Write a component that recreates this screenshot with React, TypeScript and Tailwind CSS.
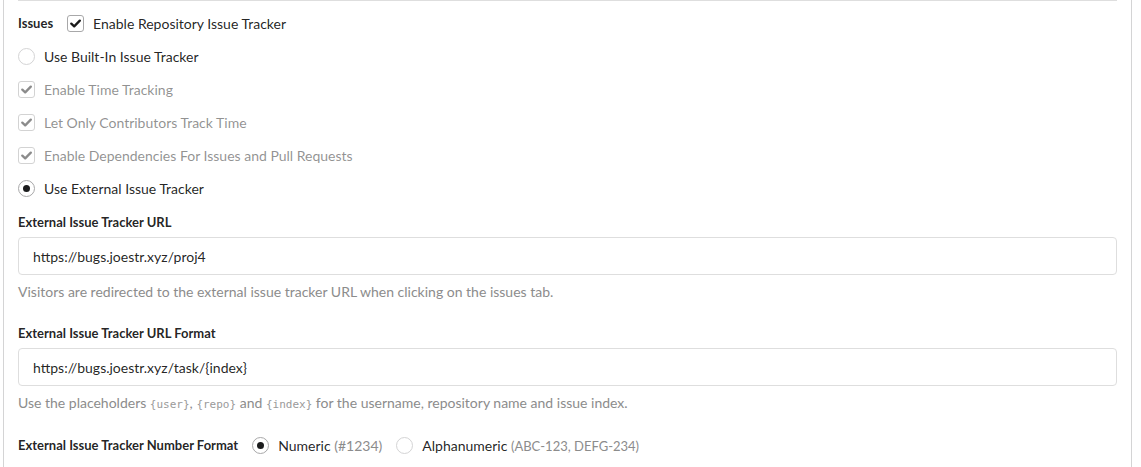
import React from "react";

function Check({ checked = true }: { checked?: boolean }) {
  return (
    <span className="relative flex h-[17px] w-[17px] shrink-0 items-center justify-center rounded-[3px] border border-[#a8a8a9] bg-white">
      {checked && (
        <svg width="11" height="9" viewBox="0 0 11 9" fill="none">
          <path d="M1.3 4.6 L4.2 7.4 L9.8 1.6" stroke="#1a1a1a" strokeWidth="2.3" strokeLinecap="round" strokeLinejoin="round" />
        </svg>
      )}
    </span>
  );
}

function Radio({ checked = false }: { checked?: boolean }) {
  return (
    <span
      className={
        "flex h-[17px] w-[17px] shrink-0 items-center justify-center rounded-full border bg-white " +
        (checked ? "border-[#a8a8a9]" : "border-[#d4d4d5]")
      }
    >
      {checked && <span className="h-[7px] w-[7px] rounded-full bg-[#1b1c1d]" />}
    </span>
  );
}

function Row({ children, disabled = false }: { children: React.ReactNode; disabled?: boolean }) {
  return (
    <div className={"flex h-[17px] items-center " + (disabled ? "opacity-50" : "")}>{children}</div>
  );
}

function Code({ children }: { children: React.ReactNode }) {
  return (
    <span className="text-[11px] text-[#9a9a9a]" style={{ fontFamily: "'DejaVu Sans Mono', monospace" }}>
      {children}
    </span>
  );
}

export default function App() {
  return (
    <div
      className="ml-[3px] h-[467px] w-[1129px] border-x border-[#d4d4d5] bg-white px-[14px] text-[14px] text-[#000000de]"
      style={{ fontFamily: "Lato, 'Noto Sans', sans-serif" }}
    >
      <div className="h-px bg-[#dedede]" />
      <div className="mt-[14px] flex flex-col gap-4">
        <Row>
          <span className="text-[13px] font-bold">Issues</span>
          <span className="ml-[14px]">
            <Check />
          </span>
          <span className="ml-[9px]">Enable Repository Issue Tracker</span>
        </Row>
        <Row>
          <Radio />
          <span className="ml-[9px]">Use Built-In Issue Tracker</span>
        </Row>
        <Row disabled>
          <Check />
          <span className="ml-[9px]">Enable Time Tracking</span>
        </Row>
        <Row disabled>
          <Check />
          <span className="ml-[9px]">Let Only Contributors Track Time</span>
        </Row>
        <Row disabled>
          <Check />
          <span className="ml-[9px]">Enable Dependencies For Issues and Pull Requests</span>
        </Row>
        <Row>
          <Radio checked />
          <span className="ml-[9px]">Use External Issue Tracker</span>
        </Row>
      </div>

      <div className="mt-[17px] text-[13px] font-bold leading-[16px]">External Issue Tracker URL</div>
      <div className="mt-[7px] flex h-[38px] items-center rounded-[4px] border border-[#dedede] px-[14px]">
        https://bugs.joestr.xyz/proj4
      </div>
      <div className="mt-[8px] leading-[17px] text-[#8c8c8c]">
        Visitors are redirected to the external issue tracker URL when clicking on the issues tab.
      </div>

      <div className="mt-[25px] text-[13px] font-bold leading-[16px]">External Issue Tracker URL Format</div>
      <div className="mt-[7px] flex h-[38px] items-center rounded-[4px] border border-[#dedede] px-[14px]">
        https://bugs.joestr.xyz/task/{"{index}"}
      </div>
      <div className="mt-[8px] leading-[17px] text-[#8c8c8c]">
        Use the placeholders <Code>{"{user}"}</Code>, <Code>{"{repo}"}</Code> and <Code>{"{index}"}</Code> for the
        username, repository name and issue index.
      </div>

      <div className="mt-[24px] flex h-[17px] items-center">
        <span className="text-[13px] font-bold">External Issue Tracker Number Format</span>
        <span className="ml-[14px]">
          <Radio checked />
        </span>
        <span className="ml-[9px]">
          Numeric <span className="text-[#8c8c8c]">(#1234)</span>
        </span>
        <span className="ml-[14px]">
          <Radio />
        </span>
        <span className="ml-[9px]">
          Alphanumeric <span className="text-[13px] text-[#8c8c8c]">(ABC-123, DEFG-234)</span>
        </span>
      </div>
    </div>
  );
}
